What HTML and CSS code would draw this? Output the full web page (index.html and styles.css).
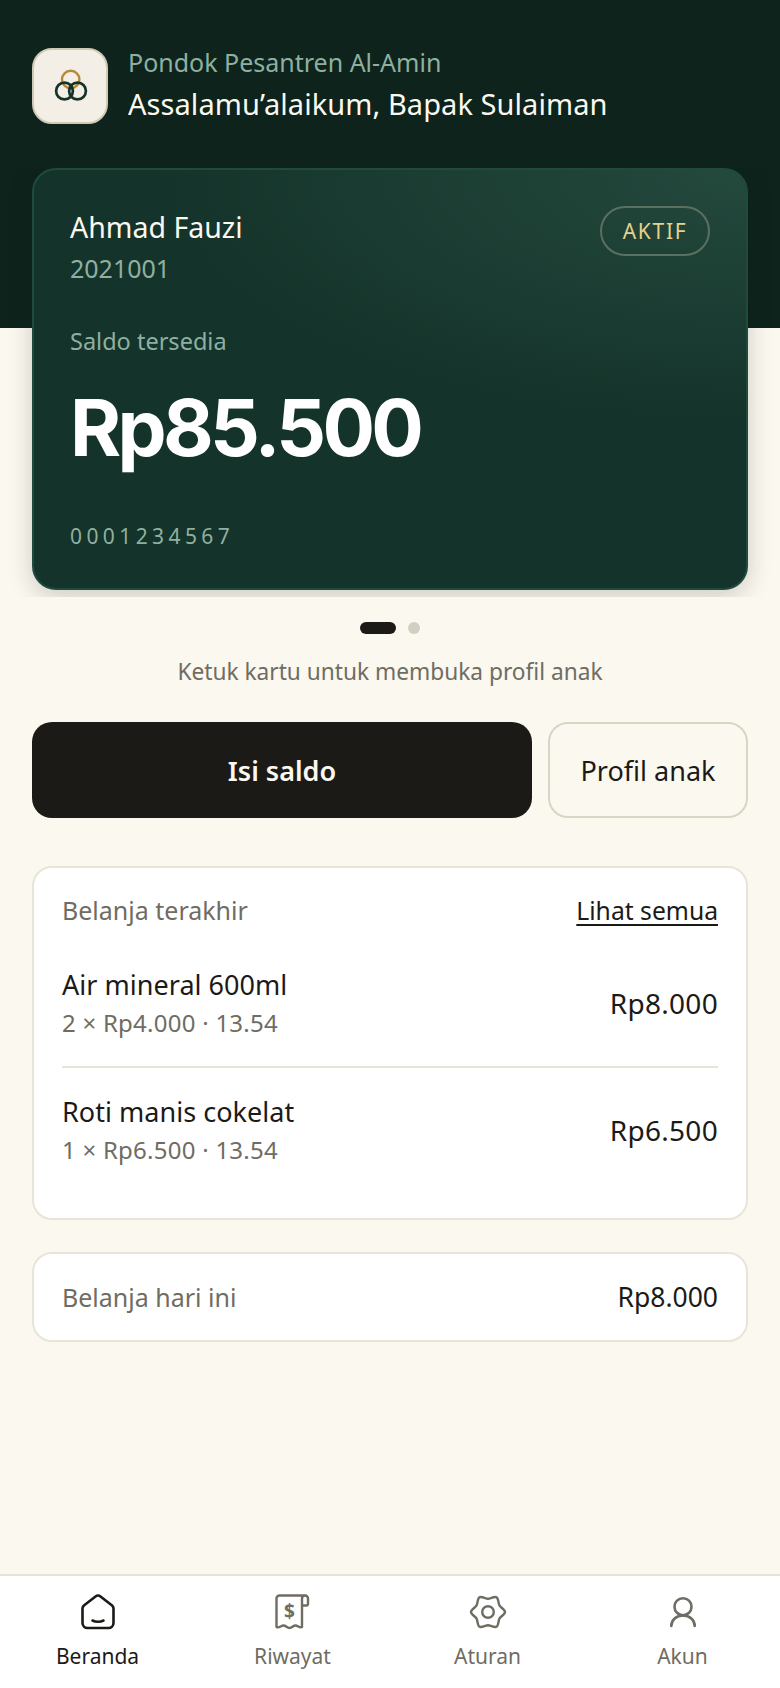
FILE: index.html
```html
<!DOCTYPE html>
<html lang="id">
<head>
<meta charset="utf-8">
<title>Beranda</title>
<link rel="stylesheet" href="styles.css">
</head>
<body>
<div class="app">
  <main class="main">
    <header class="hero">
      <div class="logo">
        <svg width="36" height="34" viewBox="0 0 36 34" fill="none">
          <circle cx="18.700" cy="10.500" r="8.700" stroke="#b8893a" stroke-width="2.400"/>
          <circle cx="12.500" cy="22" r="8.400" stroke="#15332a" stroke-width="2.700"/>
          <circle cx="25.500" cy="22" r="8.400" stroke="#15332a" stroke-width="2.700"/>
        </svg>
      </div>
      <div class="hero-text">
        <div class="school">Pondok Pesantren Al-Amin</div>
        <div class="greet">Assalamu’alaikum, Bapak Sulaiman</div>
      </div>
    </header>
    <div class="carousel">
      <section class="student-card">
        <div class="card-top">
          <div>
            <div class="student-name">Ahmad Fauzi</div>
            <div class="student-id">2021001</div>
          </div>
          <span class="badge">AKTIF</span>
        </div>
        <div class="saldo-label">Saldo tersedia</div>
        <div class="saldo">Rp85.500</div>
        <div class="card-no">0001234567</div>
      </section>
    </div>
    <div class="dots"><span class="dot dot-on"></span><span class="dot"></span></div>
    <p class="hint">Ketuk kartu untuk membuka profil anak</p>
    <div class="actions">
      <button class="btn btn-dark">Isi saldo</button>
      <button class="btn btn-light">Profil anak</button>
    </div>
    <section class="panel panel-list">
      <div class="panel-head">
        <span class="muted">Belanja terakhir</span>
        <a class="link">Lihat semua</a>
      </div>
      <div class="item">
        <div><div class="item-name">Air mineral 600ml</div><div class="item-meta">2 × Rp4.000 · 13.54</div></div>
        <div class="item-price">Rp8.000</div>
      </div>
      <div class="item item-last">
        <div><div class="item-name">Roti manis cokelat</div><div class="item-meta">1 × Rp6.500 · 13.54</div></div>
        <div class="item-price">Rp6.500</div>
      </div>
    </section>
    <section class="panel panel-today">
      <span class="muted">Belanja hari ini</span>
      <span class="today-val">Rp8.000</span>
    </section>
  </main>
  <nav class="nav">
    <a class="nav-item nav-on">
      <svg width="38" height="38" viewBox="0 0 38 38" fill="none" stroke="currentColor" stroke-width="2.600" stroke-linecap="round" stroke-linejoin="round">
        <path d="M3.500 15.500a4 4 0 0 1 1.400-3L16.500 3.500a4 4 0 0 1 5 0l11.600 9a4 4 0 0 1 1.400 3V30a5 5 0 0 1-5 5H8.500a5 5 0 0 1-5-5z"/>
        <path d="M13.500 27.500c3 1.500 8 1.500 11 0"/>
      </svg>
      <span>Beranda</span>
    </a>
    <a class="nav-item">
      <svg width="38" height="38" viewBox="0 0 38 38" fill="none" stroke="currentColor" stroke-width="2.400" stroke-linecap="round" stroke-linejoin="round">
        <path d="M32 2.500H5.500a3 3 0 0 0-3 3V34c2.500 1.500 4.500-1.500 7-1.500s3.500 2.500 6 2.500 3.500-2.500 6-2.500 4 2.800 6.500 1.500V5.500a3 3 0 0 1 3-3 3 3 0 0 1 3 3v5.500a1.500 1.500 0 0 1-1.500 1.500H29"/>
        <text x="15.500" y="24.500" class="dollar" stroke="none" fill="currentColor">$</text>
      </svg>
      <span>Riwayat</span>
    </a>
    <a class="nav-item">
      <svg width="38" height="38" viewBox="0 0 38 38" fill="none" stroke="currentColor" stroke-width="2.400" stroke-linecap="round" stroke-linejoin="round">
        <circle cx="19" cy="19" r="5.800"/>
        <path d="M19 5.800C21.600 5.800 25.250 2.980 27.500 4.280C29.750 5.580 29.130 10.150 30.430 12.400C31.730 14.650 36 16.400 36 19C36 21.600 31.730 23.350 30.430 25.600C29.130 27.850 29.750 32.420 27.500 33.720C25.250 35.020 21.600 32.200 19 32.200C16.400 32.200 12.750 35.020 10.500 33.720C8.250 32.420 8.870 27.850 7.570 25.600C6.270 23.350 2 21.600 2 19C2 16.400 6.270 14.650 7.570 12.400C8.870 10.150 8.250 5.580 10.500 4.280C12.750 2.980 16.400 5.800 19 5.800z"/>
      </svg>
      <span>Aturan</span>
    </a>
    <a class="nav-item">
      <svg width="38" height="38" viewBox="0 0 38 38" fill="none" stroke="currentColor" stroke-width="2.600" stroke-linecap="round" stroke-linejoin="round">
        <circle cx="19" cy="13.700" r="8.500"/>
        <path d="M7.300 33c0-6 5-10.500 11.700-10.500s11.700 4.500 11.700 10.500"/>
      </svg>
      <span>Akun</span>
    </a>
  </nav>
</div>
</body>
</html>
```
FILE: styles.css
```css
* { box-sizing: border-box; }
html, body { margin: 0; padding: 0; }
body { font-family: "Noto Sans", "Open Sans", sans-serif; background: #fbf8f0; color: #1c1a17; }
.app { width: 780px; height: 1688px; display: flex; flex-direction: column; background: #fbf8f0; overflow: hidden; }
.main { flex: 1; display: flex; flex-direction: column; }
.hero { height: 328px; margin-bottom: -160px; background: #0d231c; padding: 48px 32px 0; display: flex; gap: 20px; align-items: flex-start; }
.logo { width: 76px; height: 76px; border-radius: 20px; background: #f3efe6; border: 2px solid #cfc9b5; display: flex; align-items: center; justify-content: center; flex: none; }
.hero-text { margin-top: -2px; }
.school { font-size: 25px; line-height: 32px; color: #8fb0a0; }
.greet { font-size: 29px; line-height: 40px; margin-top: 6px; letter-spacing: .07px; color: #fbf8f0; }
.carousel { padding: 0 32px 7px; overflow: hidden; position: relative; }
.student-card { height: 422px; border-radius: 24px; border: 2px solid #1f4a3c; padding: 38px 36px 0; color: #fbf8f0; background: radial-gradient(85% 62% at 100% 0%, #24493d 0%, rgba(36,73,61,0) 100%), #14332a; box-shadow: 0 6px 24px rgba(28,26,23,.2); }
.card-top { display: flex; justify-content: space-between; align-items: flex-start; }
.student-name { font-size: 28.500px; line-height: 38px; }
.student-id { font-size: 25px; line-height: 32px; margin-top: 6px; color: #8fb0a0; }
.badge { height: 50px; width: 110px; margin-top: -2px; border-radius: 25px; border: 2px solid #5b7060; color: #e6d28f; font-size: 21px; letter-spacing: 1.700px; display: flex; align-items: center; justify-content: center; }
.saldo-label { font-size: 23.500px; line-height: 32px; margin-top: 41px; color: #8fb0a0; }
.saldo { font-family: "Inter", sans-serif; font-weight: 700; font-size: 78px; line-height: 96px; margin-top: 23px; letter-spacing: -3.700px; color: #fff; }
.card-no { font-size: 21px; line-height: 28px; margin-top: 46px; letter-spacing: 4.400px; color: #8fb0a0; }
.dots { display: flex; justify-content: center; gap: 12px; margin-top: 25px; }
.dot { width: 12px; height: 12px; border-radius: 6px; background: #d2cfc2; }
.dot-on { width: 36px; background: #1c1a17; }
.hint { margin: 22px 0 0; text-align: center; font-size: 22.700px; line-height: 32px; color: #6f6c62; }
.actions { display: flex; gap: 16px; padding: 0 32px; margin-top: 34px; }
.btn { height: 96px; border-radius: 20px; font: inherit; font-size: 27px; cursor: pointer; }
.btn-dark { flex: 1; background: #1c1a17; color: #fbf8f0; border: 0; font-weight: 600; }
.btn-light { width: 200px; background: #fbf8f0; color: #1c1a17; border: 2px solid #d9d5c5; }
.panel { margin: 0 32px; background: #fff; border: 2px solid #e8e4d8; border-radius: 20px; }
.panel-list { margin-top: 48px; height: 354px; padding: 26px 28px 0; }
.panel-head { display: flex; justify-content: space-between; align-items: center; height: 32px; margin-bottom: 15px; }
.muted { color: #6f6c62; font-size: 25px; }
.link { color: #1c1a17; font-size: 24.700px; text-decoration: underline; text-underline-offset: 4px; text-decoration-thickness: 2px; }
.item { display: flex; justify-content: space-between; align-items: center; padding: 26px 0 27px; border-bottom: 2px solid #e8e4d8; }
.item-last { border-bottom: 0; }
.item-name { font-size: 27px; line-height: 36px; letter-spacing: .03px; }
.item-meta { font-size: 24px; line-height: 32px; margin-top: 4px; letter-spacing: .25px; color: #6f6c62; }
.item-price { font-size: 28px; letter-spacing: .3px; }
.panel-today { margin-top: 32px; height: 90px; padding: 0 28px; display: flex; justify-content: space-between; align-items: center; }
.today-val { font-size: 26.500px; }
.nav { height: 114px; background: #fff; border-top: 2px solid #e5e2d7; display: grid; grid-template-columns: repeat(4, 1fr); flex: none; }
.nav-item { display: flex; flex-direction: column; align-items: center; padding-top: 17px; color: #6f6c62; font-size: 21px; line-height: 30px; gap: 10px; }
.nav-on { color: #1c1a17; }
.dollar { font-size: 19px; font-weight: 700; text-anchor: middle; }
```
